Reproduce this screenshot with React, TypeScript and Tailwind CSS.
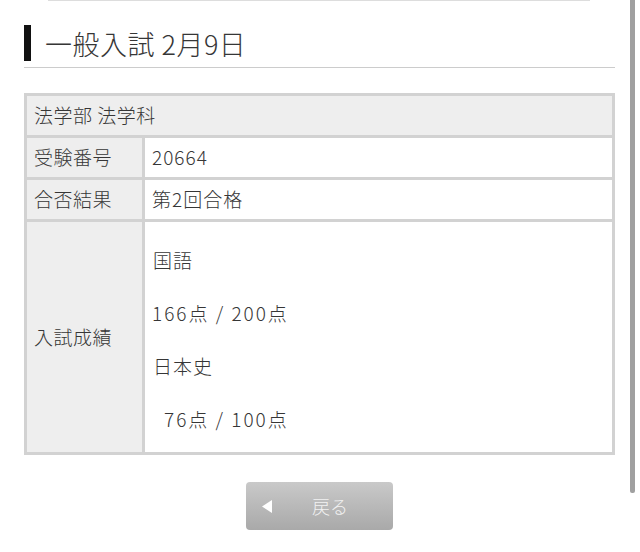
const font = "font-['Noto_Sans_CJK_JP','Noto_Sans',sans-serif]";

function Row({ label, value }: { label: string; value: string }) {
  return (
    <div className="flex border-t-[3px] border-[#d2d2d2]">
      <div className="w-[118px] h-[39px] shrink-0 flex items-center pl-[7px] bg-[#eeeeee] border-r-[3px] border-[#d2d2d2] tracking-[0.5px]">
        {label}
      </div>
      <div className="flex-1 h-[39px] flex items-center pl-[7px] bg-white tracking-[1px]">{value}</div>
    </div>
  );
}

export default function App() {
  const scores = [
    { text: "国語", pad: "pl-[1px] tracking-[1px]" },
    { text: "166点 / 200点", pad: "tracking-[2px]" },
    { text: "日本史", pad: "pl-[1px] tracking-[1px]" },
    { text: "76点 / 100点", pad: "pl-[12px] tracking-[2px]" },
  ];

  return (
    <div className={`relative w-[640px] h-[552px] overflow-hidden bg-white text-[#363636] font-light ${font}`}>
      <div className="ml-[48px] w-[542px] h-px bg-[#dddddd]" />

      <div className="pl-[24px] pr-[25px]">
        {/* heading */}
        <div className="mt-[24px] flex items-center h-[36px]">
          <div className="w-[7px] h-[36px] bg-[#111111]" />
          <h1 className="ml-[14px] text-[27px] leading-none text-[#363636] tracking-[0.5px]">
            一般入試 2月9日
          </h1>
        </div>
        <div className="mt-[6px] h-px bg-[#cccccc]" />

        {/* result table */}
        <div className="mt-[25px] border-[3px] border-[#d2d2d2] text-[19px]">
          <div className="h-[39px] flex items-center pl-[7px] bg-[#eeeeee] tracking-[0.5px]">法学部 法学科</div>
          <Row label="受験番号" value="20664" />
          <Row label="合否結果" value="第2回合格" />
          <div className="flex border-t-[3px] border-[#d2d2d2]">
            <div className="w-[118px] shrink-0 flex items-center pl-[7px] bg-[#eeeeee] border-r-[3px] border-[#d2d2d2] tracking-[0.5px]">
              入試成績
            </div>
            <div className="flex-1 flex flex-col pt-[12px] pb-[6px] pl-[7px] bg-white">
              {scores.map((s) => (
                <div key={s.text} className={`h-[53px] flex items-center ${s.pad}`}>
                  {s.text}
                </div>
              ))}
            </div>
          </div>
        </div>

        {/* back button */}
        <div className="mt-[27px] flex justify-center">
          <button className="w-[147px] h-[48px] rounded-[4px] bg-gradient-to-b from-[#c9c9c9] to-[#a9a9a9] flex items-center pl-[16px] text-[18px] text-[#f2f2f2]">
            <svg width="10" height="13" viewBox="0 0 10 13" className="shrink-0">
              <polygon points="10,0 10,13 0,6.5" fill="#ffffff" />
            </svg>
            <span className="ml-[40px]">戻る</span>
          </button>
        </div>
      </div>

      {/* scroll indicator */}
      <div className="absolute right-[5px] top-0 w-[5px] h-[493px] bg-[#a0a0a0] rounded-b-[2px]" />
    </div>
  );
}
